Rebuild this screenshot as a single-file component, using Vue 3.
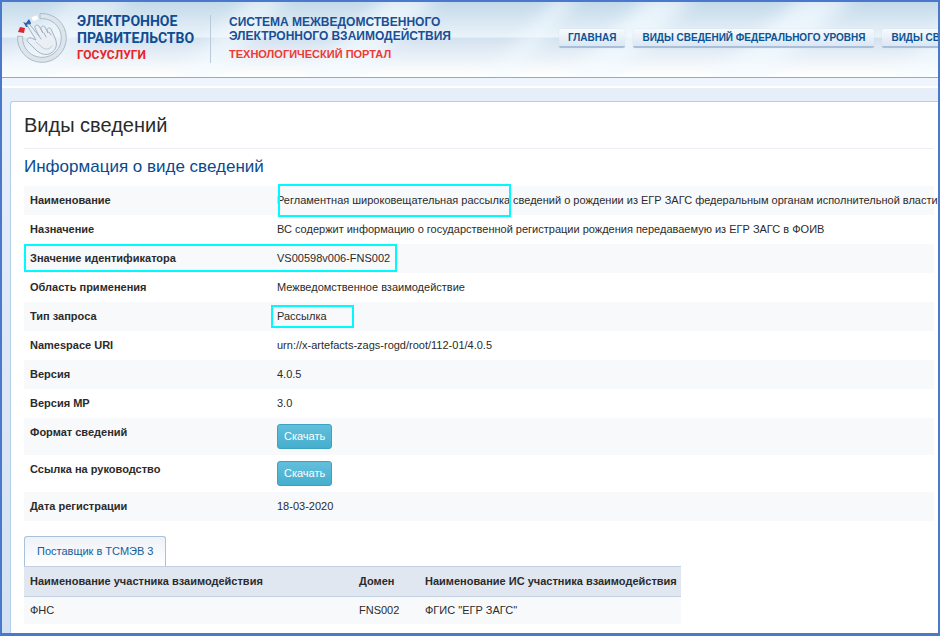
<script setup>
const navItems = ['ГЛАВНАЯ', 'ВИДЫ СВЕДЕНИЙ ФЕДЕРАЛЬНОГО УРОВНЯ', 'ВИДЫ СВ']

const rows = [
  {
    label: 'Наименование',
    value:
      'Регламентная широковещательная рассылка сведений о рождении из ЕГР ЗАГС федеральным органам исполнительной власти',
    mark: 'name',
  },
  {
    label: 'Назначение',
    value: 'ВС содержит информацию о государственной регистрации рождения передаваемую из ЕГР ЗАГС в ФОИВ',
  },
  { label: 'Значение идентификатора', value: 'VS00598v006-FNS002', mark: 'id' },
  { label: 'Область применения', value: 'Межведомственное взаимодействие' },
  { label: 'Тип запроса', value: 'Рассылка', mark: 'type' },
  { label: 'Namespace URI', value: 'urn://x-artefacts-zags-rogd/root/112-01/4.0.5' },
  { label: 'Версия', value: '4.0.5' },
  { label: 'Версия МР', value: '3.0' },
  { label: 'Формат сведений', download: true },
  { label: 'Ссылка на руководство', download: true },
  { label: 'Дата регистрации', value: '18-03-2020' },
]

const providers = [{ name: 'ФНС', domain: 'FNS002', system: 'ФГИС "ЕГР ЗАГС"' }]

// top x, bottom x, width, opacity of each light streak in the header
const streaks = [
  [70, -20, 60, 0.5],
  [248, 168, 40, 0.6],
  [385, 295, 52, 0.7],
  [556, 480, 22, 0.6],
  [646, 556, 48, 0.7],
  [800, 700, 54, 0.7],
  [965, 885, 34, 0.6],
]
</script>

<template>
  <div class="page">
    <header class="header">
      <svg class="header__glare" viewBox="0 0 936 76" preserveAspectRatio="xMinYMin slice" aria-hidden="true">
        <defs>
          <filter id="soft" x="-60%" y="-30%" width="220%" height="160%">
            <feGaussianBlur stdDeviation="8" />
          </filter>
        </defs>
        <g filter="url(#soft)" fill="#f4fbff">
          <polygon
            v-for="([top, bottom, width, alpha], i) in streaks"
            :key="i"
            :points="`${top},-6 ${top + width},-6 ${bottom + width},84 ${bottom},84`"
            :opacity="alpha"
          />
        </g>
      </svg>

      <a class="brand" href="#">
        <svg class="brand__icon" viewBox="0 0 52 52" fill="none" aria-hidden="true">
          <!-- open ring -->
          <path
            d="M24 1.600A24.400 24.400 0 1 1 1.600 24L6.600 24.600A19.400 19.400 0 1 0 24 6.700Z"
            fill="#dde5ec"
            stroke="#adbac7"
          />
          <!-- tricolor -->
          <path d="M15 5l6-2 2 4-6 3z" fill="#fff" stroke="#d3dce5" stroke-width=".6" />
          <path d="M7 10l3 1 3-4 2 4-2 4-3 0-1-2z" fill="#2d62ad" />
          <path d="M4 15l5 1-1 5-6-1z" fill="#e02531" />
          <!-- hand -->
          <path
            d="M11 13c1-1 2-1 3 0l9 11-4-8c-1-2 2-4 4-2l4 7-2-4c-1-2 2-4 4-2l3 6-1-3c0-2 3-3 4-1l4 9c3 7 1 12-4 15-5 3-10 1-14-2l-9-9c-2-2 0-5 3-4l5 2z"
            fill="#e9eff5"
            stroke="#a3b2c1"
            stroke-linejoin="round"
          />
          <path d="M23 24l2 3M28 21l2 4M33 20l2 3" stroke="#a3b2c1" stroke-linecap="round" />
          <path d="M20 30l7 6c3 2 7 1 9-2" stroke="#c0cbd6" stroke-linecap="round" />
        </svg>
        <span class="brand__text">
          <span>ЭЛЕКТРОННОЕ</span>
          <span>ПРАВИТЕЛЬСТВО</span>
          <span class="brand__sub">ГОСУСЛУГИ</span>
        </span>
      </a>

      <div class="portal">
        <span>СИСТЕМА МЕЖВЕДОМСТВЕННОГО</span>
        <span>ЭЛЕКТРОННОГО ВЗАИМОДЕЙСТВИЯ</span>
        <span class="portal__sub">ТЕХНОЛОГИЧЕСКИЙ ПОРТАЛ</span>
      </div>

      <nav class="nav">
        <a v-for="item in navItems" :key="item" class="nav__link" href="#">{{ item }}</a>
      </nav>
    </header>

    <main class="body">
      <section class="panel">
        <h1 class="panel__title">Виды сведений</h1>
        <h2 class="panel__subtitle">Информация о виде сведений</h2>

        <table class="info">
          <tbody>
            <tr v-for="row in rows" :key="row.label">
              <th scope="row">
                {{ row.label }}
                <i v-if="row.mark === 'id'" class="mark mark--id"></i>
              </th>
              <td>
                <button v-if="row.download" class="btn" type="button">Скачать</button>
                <template v-else>{{ row.value }}</template>
                <i v-if="row.mark && row.mark !== 'id'" class="mark" :class="`mark--${row.mark}`"></i>
              </td>
            </tr>
          </tbody>
        </table>

        <div class="tabs">
          <button class="tabs__item" type="button">Поставщик в ТСМЭВ 3</button>
        </div>
        <table class="providers">
          <thead>
            <tr>
              <th scope="col">Наименование участника взаимодействия</th>
              <th scope="col">Домен</th>
              <th scope="col">Наименование ИС участника взаимодействия</th>
            </tr>
          </thead>
          <tbody>
            <tr v-for="p in providers" :key="p.name">
              <td>{{ p.name }}</td>
              <td>{{ p.domain }}</td>
              <td>{{ p.system }}</td>
            </tr>
          </tbody>
        </table>
      </section>
    </main>
  </div>
</template>

<style>
body {
  margin: 0;
}
</style>

<style scoped>
.page {
  box-sizing: border-box;
  display: flex;
  flex-direction: column;
  min-height: 100vh;
  overflow: hidden;
  border: 2px solid #4a78ca;
  border-bottom-width: 3px;
  font-family: 'Liberation Sans', Arial, sans-serif;
  font-size: 11px;
  line-height: 17px;
  color: #2b2b2b;
  background: #e5eef9;
}

.header {
  position: relative;
  display: flex;
  align-items: flex-start;
  height: 75px;
  overflow: hidden;
  border-bottom: 1px solid #86aed0;
  background: linear-gradient(#c3d9e9 0, #eaf3fa 35px, #d3e2f0 36px, #f4f8fb 64px, #fff 75px);
}

.header__glare {
  position: absolute;
  inset: 0;
  width: 100%;
  height: 100%;
}

.brand,
.portal,
.nav {
  position: relative;
  flex-shrink: 0;
}

.brand {
  display: flex;
  align-items: flex-start;
  width: 194px;
  padding: 10px 0 0 14px;
  text-decoration: none;
}

.brand__icon {
  width: 52px;
  height: 52px;
}

.brand__text {
  display: flex;
  flex-direction: column;
  padding: 1px 0 0 9px;
  font-family: Roboto, sans-serif;
  font-size: 14px;
  font-weight: 700;
  line-height: 17px;
  color: #0f4c92;
}

.brand__sub {
  font-size: 12px;
  color: #e8252b;
}

.portal {
  display: flex;
  flex-direction: column;
  height: 48px;
  margin-top: 13px;
  padding-left: 18px;
  border-left: 1px solid #b9cada;
  font-size: 12px;
  font-weight: 700;
  line-height: 14px;
  color: #1a4f95;
}

.portal__sub {
  padding-top: 4px;
  font-size: 11px;
  color: #ee3a35;
}

.nav {
  display: flex;
  gap: 8px;
  margin: 27px 0 0 108px;
}

.nav__link {
  padding: 0 9px;
  border-bottom: 2px solid #a9bfd9;
  border-radius: 2px;
  box-shadow: 0 0 1px #b4c8dd;
  font-size: 10px;
  font-weight: 700;
  color: #0b5394;
  white-space: nowrap;
  text-decoration: none;
  background: linear-gradient(#f6fafd, #dbe7f3);
}

.body {
  display: flex;
  flex: 1;
  padding: 23px 0 0 8px;
  background: linear-gradient(#eff5fd 0, #eff5fd 8px, #fff 8px, #fff 10px, #e5eef9 10px, #e5eef9 60px, #d3e1f2 100%);
}

.panel {
  flex: 1;
  min-width: 0;
  padding: 11px 4px 8px 13px;
  border: 1px solid #b5cfea;
  border-width: 1px 0 0 1px;
  border-radius: 3px 0 0 0;
  background: #fff;
}

.panel__title {
  margin: 0 0 7px;
  padding-bottom: 10px;
  border-bottom: 1px solid #eceff5;
  font-size: 20px;
  font-weight: 400;
  line-height: 25px;
}

.panel__subtitle {
  margin: 0 0 8px;
  font-size: 17px;
  font-weight: 400;
  line-height: 22px;
  color: #084a90;
}

.info,
.providers {
  border-collapse: collapse;
  table-layout: fixed;
  text-align: left;
}

.info {
  width: 100%;
  margin-bottom: 15px;
}

.info th,
.info td {
  position: relative;
  padding: 6px;
  vertical-align: top;
}

.info th {
  width: 235px;
}

.info td {
  padding-right: 0;
  white-space: nowrap;
}

.info tr:nth-child(odd),
.providers tbody tr {
  background: #f8f9fb;
}

.btn {
  display: block;
  height: 25px;
  padding: 0 6px;
  border: 1px solid #3ba3c3;
  border-radius: 3px;
  font: inherit;
  color: #fff;
  background: linear-gradient(#62bfdc, #46aecd);
}

.mark {
  position: absolute;
  z-index: 1;
  box-sizing: border-box;
  border: 2px solid #00fbff;
  pointer-events: none;
}

.mark--name {
  top: -2px;
  left: 7px;
  width: 233px;
  height: 33px;
}

.mark--id {
  top: 0;
  left: 0;
  width: 373px;
  height: 28px;
}

.mark--type {
  top: 3px;
  left: 0;
  width: 83px;
  height: 23px;
}

.tabs {
  display: flex;
}

.tabs__item {
  height: 30px;
  padding: 0 12px;
  border: 1px solid #a9c2da;
  border-bottom: 0;
  border-radius: 3px 3px 0 0;
  font: inherit;
  color: #14609a;
  background: linear-gradient(#eef1f7, #fff);
}

.providers {
  width: 657px;
}

.providers th,
.providers td {
  padding: 6px 0 6px 6px;
  white-space: nowrap;
}

.providers td {
  padding-top: 5px;
  padding-bottom: 5px;
}

.providers th {
  border-top: 1px solid #c3d0e2;
  border-bottom: 1px solid #c3d0e2;
  background: #e1e7f1;
}

.providers th:first-child {
  width: 323px;
}

.providers th:nth-child(2) {
  width: 60px;
}
</style>
